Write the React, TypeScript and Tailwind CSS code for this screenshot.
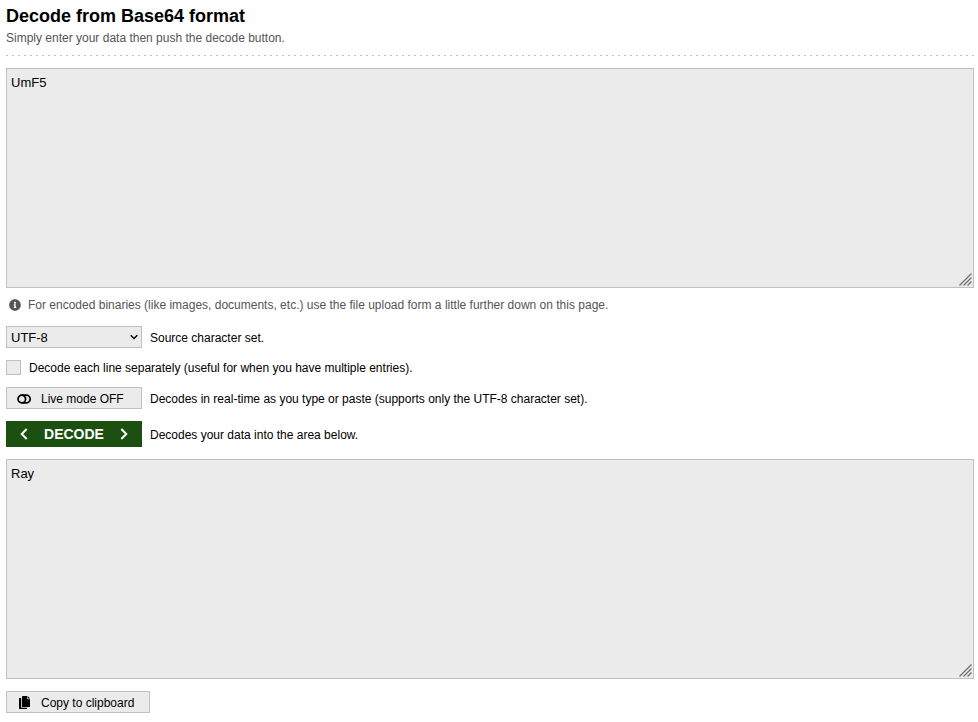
import { useState } from 'react'
import { FaInfoCircle } from 'react-icons/fa'

const control = 'border border-[#c0c0c0] bg-[#ebebeb] text-black rounded-none'

function Grip() {
  return (
    <svg
      className="pointer-events-none absolute right-0.5 bottom-0.5 size-3.5"
      viewBox="0 0 14 14"
      fill="none"
      stroke="#6e6e6e"
      strokeWidth="1.2"
      aria-hidden="true"
    >
      <path d="M1.5 13.5 13.5 1.5M5.5 13.5 13.5 5.5M9.5 13.5 13.5 9.5" />
    </svg>
  )
}

interface AreaProps {
  label: string
  value: string
  onChange?: (value: string) => void
}

function Area({ label, value, onChange }: AreaProps) {
  return (
    <div className="relative">
      <textarea
        aria-label={label}
        value={value}
        readOnly={!onChange}
        spellCheck={false}
        onChange={(e) => onChange?.(e.target.value)}
        className={`${control} block h-[220px] w-full resize-none px-1 py-1.5 text-[13px] leading-4 outline-none`}
      />
      <Grip />
    </div>
  )
}

function decode(input: string) {
  try {
    const bytes = Uint8Array.from(atob(input.trim()), (c) => c.charCodeAt(0))
    return new TextDecoder().decode(bytes)
  } catch {
    return ''
  }
}

export default function App() {
  const [input, setInput] = useState('UmF5')
  const [output, setOutput] = useState('Ray')
  const [live, setLive] = useState(false)

  const handleInput = (value: string) => {
    setInput(value)
    if (live) setOutput(decode(value))
  }

  return (
    <main className="bg-white pt-1 pr-1 pb-2 pl-1.5 font-['Liberation_Sans',Arial,sans-serif] text-xs leading-4 text-black">
      <h1 className="text-lg leading-6 font-bold">Decode from Base64 format</h1>
      <p className="mt-0.5 text-[#555555]">Simply enter your data then push the decode button.</p>
      <hr className="mt-[9px] mb-3 h-px border-0 bg-[repeating-linear-gradient(to_right,#c0c0c0_0_2px,transparent_2px_6px)]" />

      <Area label="Data to decode" value={input} onChange={handleInput} />

      <p className="mt-[9px] mb-[13px] flex items-center gap-[7px] pl-[3px] text-[#555555]">
        <FaInfoCircle size={12} />
        For encoded binaries (like images, documents, etc.) use the file upload form a little further down on this page.
      </p>

      <div className="flex flex-col gap-3">
        <div className="flex items-center gap-2">
          <div className="relative w-[136px]">
            <select id="charset" className={`${control} block h-[22px] w-full appearance-none px-1 pt-px text-[13px]`}>
              <option>UTF-8</option>
              <option>ASCII</option>
              <option>ISO-8859-1</option>
            </select>
            <svg
              className="pointer-events-none absolute top-2 right-1 h-1.5 w-2"
              viewBox="0 0 8 6"
              fill="none"
              stroke="currentColor"
              strokeWidth="1.4"
              aria-hidden="true"
            >
              <path d="M0.7 1.2 4 4.5 7.3 1.2" />
            </svg>
          </div>
          <label htmlFor="charset" className="pt-0.5">Source character set.</label>
        </div>

        <div className="flex h-[15px] items-center gap-2">
          <input id="lines" type="checkbox" className={`${control} size-[15px] appearance-none checked:bg-[#1b5011]`} />
          <label htmlFor="lines">Decode each line separately (useful for when you have multiple entries).</label>
        </div>

        <div className="flex items-center gap-2">
          <button
            type="button"
            aria-pressed={live}
            onClick={() => setLive(!live)}
            className={`${control} flex h-[22px] w-[136px] items-center gap-2.5 pt-0.5 pl-2.5`}
          >
            {/* ring sitting over the left half of a pill */}
            <svg className="h-3 w-3.5" viewBox="0 0 14 12" fill="none" stroke="currentColor" strokeWidth="1.7" aria-hidden="true">
              <circle cx="4.8" cy="6" r="3.8" />
              <path d="M5 2.2h4.4a3.8 3.8 0 0 1 0 7.6H5" />
            </svg>
            Live mode {live ? 'ON' : 'OFF'}
          </button>
          <span className="pt-0.5">Decodes in real-time as you type or paste (supports only the UTF-8 character set).</span>
        </div>

        <div className="flex items-center gap-2">
          <button
            type="button"
            onClick={() => setOutput(decode(input))}
            className="flex h-[26px] w-[136px] items-center justify-between bg-[#1b5011] px-3.5 text-sm font-bold text-white"
          >
            <svg className="h-3 w-2" viewBox="0 0 8 12" fill="none" stroke="currentColor" strokeWidth="2" aria-hidden="true">
              <path d="M6.7 1 1.7 6l5 5" />
            </svg>
            DECODE
            <svg className="h-3 w-2" viewBox="0 0 8 12" fill="none" stroke="currentColor" strokeWidth="2" aria-hidden="true">
              <path d="m1.3 1 5 5-5 5" />
            </svg>
          </button>
          <span className="pt-0.5">Decodes your data into the area below.</span>
        </div>

        <Area label="Decoded data" value={output} />

        <button
          type="button"
          onClick={() => navigator.clipboard?.writeText(output)}
          className={`${control} flex h-[22px] w-36 items-center gap-2.5 self-start pt-0.5 pl-3`}
        >
          <svg className="h-3.5 w-3" viewBox="0 0 12 14" fill="currentColor" aria-hidden="true">
            <path d="M3.5 0h4.7v3.3H11v7.2a.5.5 0 0 1-.5.5h-7a.5.5 0 0 1-.5-.5v-10a.5.5 0 0 1 .5-.5Z" />
            <path d="M8.7 0 11 2.6H8.7Z" />
            <path d="M.5 2h1.7v9.8H8v.7a.5.5 0 0 1-.5.5h-7a.5.5 0 0 1-.5-.5v-10A.5.5 0 0 1 .5 2Z" />
          </svg>
          Copy to clipboard
        </button>
      </div>
    </main>
  )
}
